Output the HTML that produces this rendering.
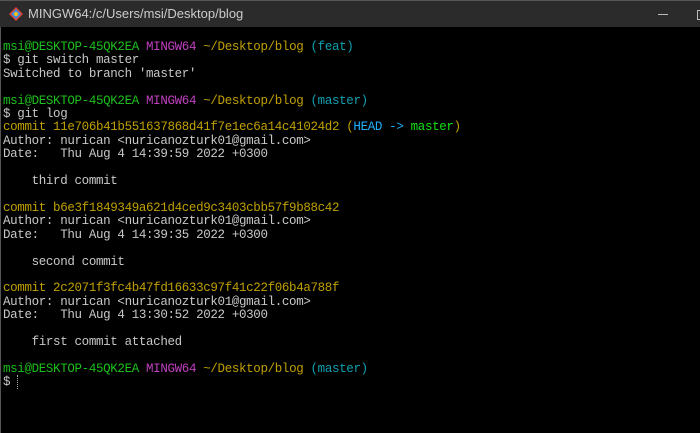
<!DOCTYPE html>
<html><head><style>
html,body{margin:0;padding:0;background:#000;width:700px;height:433px;overflow:hidden}
#tb{position:absolute;left:0;top:0;width:700px;height:27px;background:#2b2b2b;border-top:1px solid #555;box-sizing:border-box}
#tt{position:absolute;left:28px;top:5px;font:13px "Liberation Sans",sans-serif;color:#ccc}
#term{position:absolute;left:3px;top:41px;font:12.5px/13.4px "Liberation Mono",monospace;color:#c8c8c8;white-space:pre;letter-spacing:-0.35px}
.g{color:#1cc01c}.m{color:#c040c0}.y{color:#c0a000}.c{color:#10a0b0}.hc{color:#20b0ff}.hg{color:#10e010}
#lb{position:absolute;left:0;top:27px;width:1px;height:406px;background:#555}
</style></head><body>
<div id="tb">
<svg style="position:absolute;left:8px;top:5px" width="16" height="16" viewBox="0 0 16 16">
<polygon points="8,1 15,8 8,15 1,8" fill="#e04030"/>
<polygon points="8,3 13,8 8,13 3,8" fill="#3a8ee0"/>
<circle cx="8" cy="8" r="2" fill="#f4c020"/>
</svg>
<div id="tt">MINGW64:/c/Users/msi/Desktop/blog</div>
<div style="position:absolute;left:658px;top:13px;width:10px;height:1px;background:#bbb"></div>
<div style="position:absolute;left:697px;top:9px;width:8px;height:8px;border:1px solid #bbb"></div>
</div>
<div id="lb"></div>
<div id="term"><span class="g">msi@DESKTOP-45QK2EA</span> <span class="m">MINGW64</span> <span class="y">~/Desktop/blog</span> <span class="c">(feat)</span>
$ git switch master
Switched to branch 'master'

<span class="g">msi@DESKTOP-45QK2EA</span> <span class="m">MINGW64</span> <span class="y">~/Desktop/blog</span> <span class="c">(master)</span>
$ git log
<span class="y">commit 11e706b41b551637868d41f7e1ec6a14c41024d2 (</span><span class="hc">HEAD -&gt; </span><span class="hg">master</span><span class="y">)</span>
Author: nurican &lt;nuricanozturk01@gmail.com&gt;
Date:   Thu Aug 4 14:39:59 2022 +0300

    third commit

<span class="y">commit b6e3f1849349a621d4ced9c3403cbb57f9b88c42</span>
Author: nurican &lt;nuricanozturk01@gmail.com&gt;
Date:   Thu Aug 4 14:39:35 2022 +0300

    second commit

<span class="y">commit 2c2071f3fc4b47fd16633c97f41c22f06b4a788f</span>
Author: nurican &lt;nuricanozturk01@gmail.com&gt;
Date:   Thu Aug 4 13:30:52 2022 +0300

    first commit attached

<span class="g">msi@DESKTOP-45QK2EA</span> <span class="m">MINGW64</span> <span class="y">~/Desktop/blog</span> <span class="c">(master)</span>
$ <span style="border-left:1px dotted #aaa"> </span></div>
</body></html>
